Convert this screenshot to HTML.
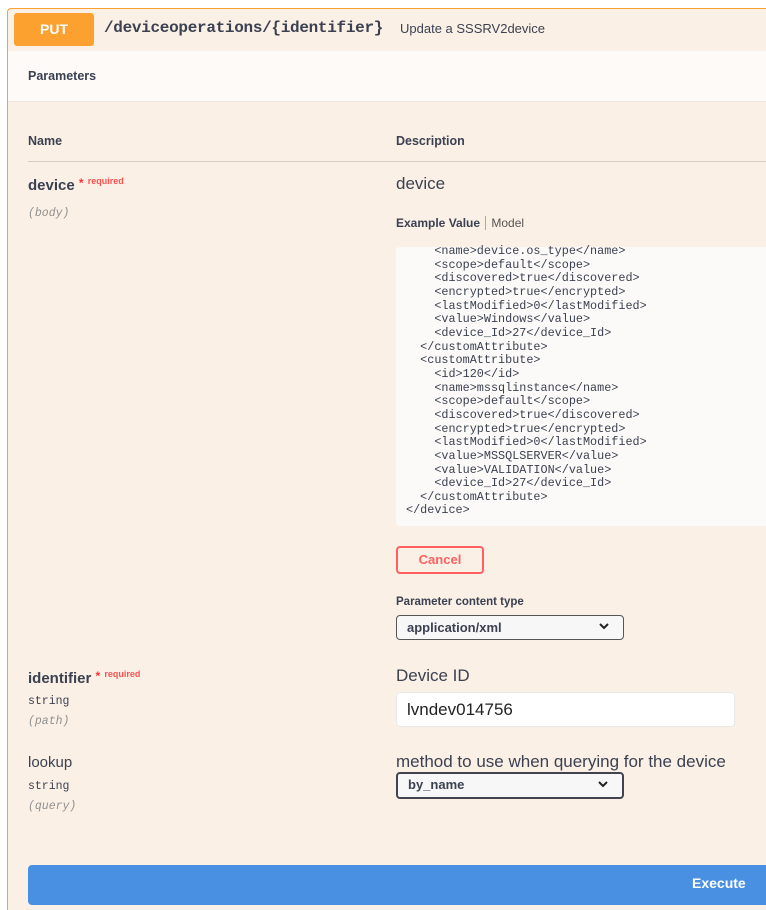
<!DOCTYPE html>
<html style="margin:0;width:766px;height:910px;overflow:hidden"><head><style>
body{margin:0;width:766px;height:910px;background:#fff;overflow:hidden;font-family:"Liberation Sans",sans-serif;position:relative}
.box{position:absolute;left:7px;top:8px;width:770px;height:902px;border:1px solid #fca130;border-bottom:none;border-radius:4px 4px 0 0;background:#fbf0e6;box-sizing:border-box;overflow:hidden}
.hdr{position:absolute;left:0;top:0;width:100%;height:42px;border-bottom:1px solid #fca130}
.put{position:absolute;left:6px;top:4px;width:80px;height:33px;background:#fca130;border-radius:3px;color:#fff;font-weight:bold;font-size:14px;text-align:center;line-height:33px}
.path{position:absolute;left:96px;top:10px;font-family:"Liberation Mono",monospace;font-size:16px;color:#3b4151;font-weight:bold;letter-spacing:-.3px}
.sum{position:absolute;left:392px;top:12px;font-size:13px;color:#3b4151}
.pbar{position:absolute;left:0;top:42px;width:100%;height:50px;background:#fdfaf7;border-bottom:1px solid #efe4da}
.t{position:absolute;color:#3b4151;white-space:nowrap}
.code{position:absolute;left:388px;top:238px;width:380px;height:279px;background:#fcfaf8;border-radius:4px}
pre{margin:0;position:absolute;left:10px;top:-2px;font-family:"Liberation Mono",monospace;font-size:11.8px;line-height:13.65px;color:#3b4151}
.cancel{position:absolute;left:388px;top:537px;width:88px;height:28px;border:2px solid #ff6060;border-radius:4px;color:#ff6060;font-weight:bold;font-size:13px;text-align:center;line-height:24px;box-sizing:border-box;background:#fbf0e6}
.sel{position:absolute;left:388px;width:228px;height:25px;border:2px solid #41444e;border-radius:4px;background:#f7f7f7;box-sizing:border-box;font-weight:bold;font-size:13px;color:#3b4151;padding-left:10px;line-height:21px}
.sel svg{position:absolute;right:14px;top:7px}
.inp{position:absolute;left:388px;top:683px;width:339px;height:35px;background:#fff;border:1px solid #e8e8e8;border-radius:4px;box-sizing:border-box;font-size:17px;padding-left:10px;line-height:33px;color:#222}
.exec{position:absolute;left:20px;top:856px;width:760px;height:40px;background:#4990e2;border-radius:4px;color:#fff;font-weight:bold;font-size:14px;line-height:36px}
.req{color:#ff5050;font-size:9px;vertical-align:6px}
.star{color:#ff3030;font-size:12px;vertical-align:3px}
.mono{font-family:"Liberation Mono",monospace;font-size:11.5px;color:#3b4151}
.it{font-style:italic;color:#909090}
</style></head><body>
<div class="box">
 <div class="hdr"><div class="put">PUT</div><div class="path">/deviceoperations/{identifier}</div><div class="sum">Update a SSSRV2device</div></div>
 <div class="pbar"><div class="t" style="left:20px;top:18px;font-weight:bold;font-size:12.5px">Parameters</div></div>
 <div class="t" style="left:20px;top:125px;font-weight:bold;font-size:12.5px">Name</div>
 <div class="t" style="left:388px;top:125px;font-weight:bold;font-size:12.5px">Description</div>
 <div style="position:absolute;left:20px;top:152px;width:760px;height:1px;background:#d8ccc2"></div>
 <div class="t" style="left:20px;top:167px;font-weight:bold;font-size:15px">device <span class="star">*</span> <span class="req">required</span></div>
 <div class="t mono it" style="left:20px;top:198px">(body)</div>
 <div class="t" style="left:388px;top:165px;font-size:17px">device</div>
 <div class="t" style="left:388px;top:207px;font-size:12px"><b>Example Value</b> <span style="border-left:1px solid #aaa;padding-left:5px;margin-left:2px;color:#555">Model</span></div>
 <div class="code"><pre>    &lt;name&gt;device.os_type&lt;/name&gt;
    &lt;scope&gt;default&lt;/scope&gt;
    &lt;discovered&gt;true&lt;/discovered&gt;
    &lt;encrypted&gt;true&lt;/encrypted&gt;
    &lt;lastModified&gt;0&lt;/lastModified&gt;
    &lt;value&gt;Windows&lt;/value&gt;
    &lt;device_Id&gt;27&lt;/device_Id&gt;
  &lt;/customAttribute&gt;
  &lt;customAttribute&gt;
    &lt;id&gt;120&lt;/id&gt;
    &lt;name&gt;mssqlinstance&lt;/name&gt;
    &lt;scope&gt;default&lt;/scope&gt;
    &lt;discovered&gt;true&lt;/discovered&gt;
    &lt;encrypted&gt;true&lt;/encrypted&gt;
    &lt;lastModified&gt;0&lt;/lastModified&gt;
    &lt;value&gt;MSSQLSERVER&lt;/value&gt;
    &lt;value&gt;VALIDATION&lt;/value&gt;
    &lt;device_Id&gt;27&lt;/device_Id&gt;
  &lt;/customAttribute&gt;
&lt;/device&gt;</pre></div>
 <div class="cancel">Cancel</div>
 <div class="t" style="left:388px;top:587px;font-weight:bold;font-size:11.5px">Parameter content type</div>
 <div class="sel" style="top:606px;border-width:1px;border-color:#555;line-height:23px">application/xml<svg width="10" height="7" viewBox="0 0 10 7"><path d="M1 1l4 4 4-4" stroke="#222" stroke-width="2" fill="none"/></svg></div>
 <div class="t" style="left:20px;top:660px;font-weight:bold;font-size:15px">identifier <span class="star">*</span> <span class="req">required</span></div>
 <div class="t mono" style="left:20px;top:686px">string</div>
 <div class="t mono it" style="left:20px;top:706px">(path)</div>
 <div class="t" style="left:388px;top:657px;font-size:17px">Device ID</div>
 <div class="inp">lvndev014756</div>
 <div class="t" style="left:20px;top:745px;font-size:15px">lookup</div>
 <div class="t mono" style="left:20px;top:771px">string</div>
 <div class="t mono it" style="left:20px;top:791px">(query)</div>
 <div class="t" style="left:388px;top:743px;font-size:17px">method to use when querying for the device</div>
 <div class="sel" style="top:763px;height:27px">by_name<svg width="10" height="7" viewBox="0 0 10 7"><path d="M1 1l4 4 4-4" stroke="#222" stroke-width="2" fill="none"/></svg></div>
 <div class="exec"><span style="position:absolute;left:664px">Execute</span></div>
</div>
</body></html>
